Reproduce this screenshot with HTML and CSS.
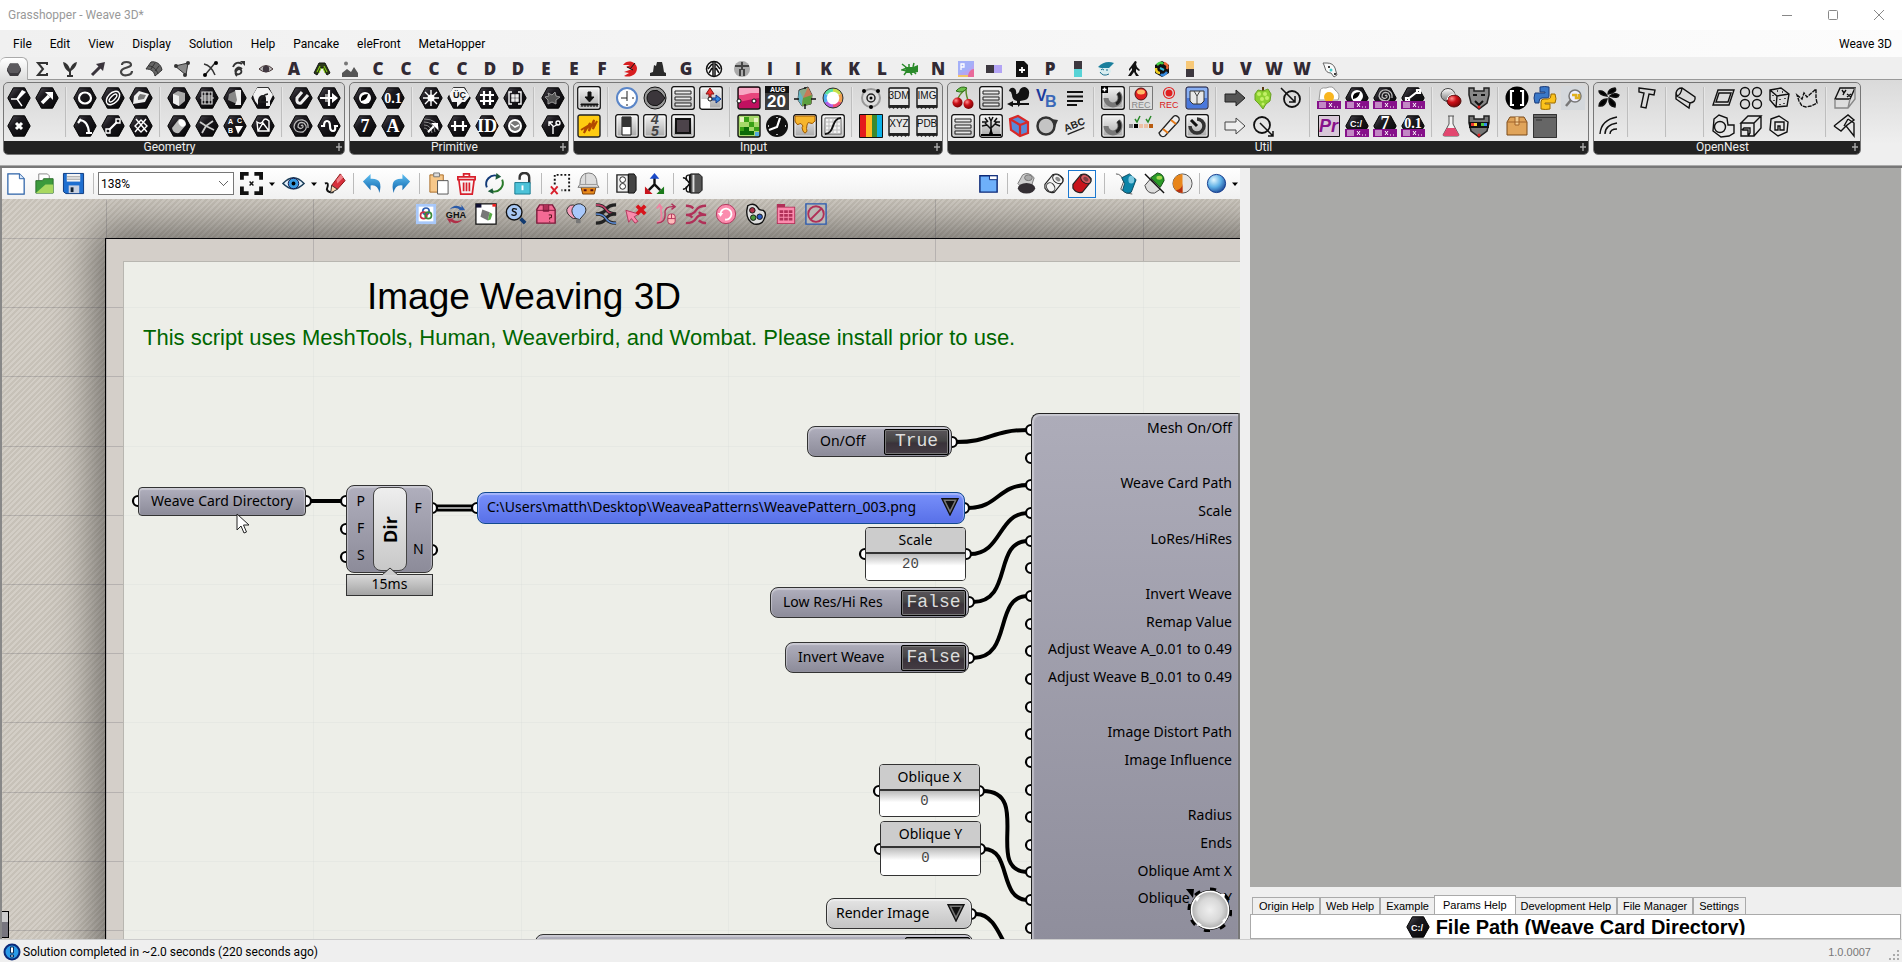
FILE: index.html
```html
<!DOCTYPE html>
<html lang="en">
<head>
<meta charset="utf-8">
<title>Grasshopper - Weave 3D*</title>
<link rel="stylesheet" href="styles.css">
</head>
<body>
<svg class="defs" aria-hidden="true">
<defs>
<linearGradient id="gh" x1="0" y1="0" x2="1" y2="1"><stop offset="0" stop-color="#55525a"/><stop offset=".35" stop-color="#1c1a1f"/><stop offset="1" stop-color="#050506"/></linearGradient>
<linearGradient id="gb" x1="0" y1="0" x2="0" y2="1"><stop offset="0" stop-color="#f4f4f4"/><stop offset="1" stop-color="#a6a6a6"/></linearGradient>
<linearGradient id="gd" x1="0" y1="0" x2="0" y2="1"><stop offset="0" stop-color="#fff"/><stop offset="1" stop-color="#777"/></linearGradient>
<linearGradient id="gblue" x1="0" y1="0" x2="0" y2="1"><stop offset="0" stop-color="#5fc0f2"/><stop offset="1" stop-color="#0b5fa8"/></linearGradient>
<radialGradient id="gred" cx=".35" cy=".3" r=".8"><stop offset="0" stop-color="#ff9090"/><stop offset=".4" stop-color="#cc1018"/><stop offset="1" stop-color="#600"/></radialGradient>
<radialGradient id="gball" cx=".35" cy=".3" r=".8"><stop offset="0" stop-color="#e2f7ff"/><stop offset=".5" stop-color="#5fb0e6"/><stop offset="1" stop-color="#123a8c"/></radialGradient>
<radialGradient id="gw" cx=".5" cy=".5" r=".5"><stop offset="0" stop-color="#efefef"/><stop offset=".6" stop-color="#d8d8d8"/><stop offset="1" stop-color="#a8a8a8"/></radialGradient>
<symbol id="hx" viewBox="0 0 24 24"><path d="M.8 12 6.4 1.8h11.2L23.2 12l-5.6 10.2H6.4z" fill="url(#gh)" stroke="#000"/></symbol>
<symbol id="bx" viewBox="0 0 24 24"><rect x=".8" y=".8" width="22.4" height="22.4" rx="2" fill="url(#gb)" stroke="#111" stroke-width="1.4"/><rect x="2" y="2" width="20" height="20" rx="1" fill="none" stroke="#fff" stroke-opacity=".8"/></symbol>
<symbol id="list" viewBox="0 0 24 24"><use href="#bx"/><path d="M4 5h16v3H4zM4 11h16v3H4zM4 17h16v3H4z" fill="#e8e8e8" stroke="#222"/></symbol>
<symbol id="chip" viewBox="0 0 24 24"><path d="M2 3a1 1 0 0 1 1-1h18a1 1 0 0 1 1 1v18H2z" fill="#e6e6e6" stroke="#111" stroke-width="1.4"/><path d="M2 19h20v4l-1.5-2-2 2-2-2-2 2-2-2-2 2-2-2-2 2-2-2-2 2z" fill="#222"/></symbol>
<symbol id="xt" viewBox="0 0 24 24"><path d="M0 15h24v8H0z" fill="#86118a"/><path d="M2 17h7M2 19h7M2 21h7M12 17l3 4M15 17l-3 4M17 21h1M20 21h1" stroke="#fff" fill="none"/></symbol>
<symbol id="jar" viewBox="0 0 24 24"><use href="#bx"/><path d="M17 7a7 7 0 1 1-12 5" fill="none" stroke="#777" stroke-width="5"/><path d="M17 7a7 7 0 0 1-2 11" fill="none" stroke="#222" stroke-width="3"/></symbol>
<symbol id="pl" viewBox="0 0 8 8"><path d="M4 0v8M1 4h6" stroke="#aaa" stroke-width="1.4"/></symbol>
<symbol id="caret" viewBox="0 0 8 8"><path d="M1 2.500h6L4 6z"/></symbol>
<symbol id="tri" viewBox="0 0 18 18"><path d="M1 .8h16L9 17z" fill="#777" stroke="#111" stroke-width="1.4"/><path d="M4.500 3h9L9 12z" fill="#111"/></symbol>
<symbol id="can" viewBox="0 0 24 24"><path d="M2 13 10 3q6-3 11 4 0 3-1 4l-8 10Q6 23 2 17z" stroke="#222" stroke-width="1.200"/><ellipse cx="15.500" cy="7.500" rx="6" ry="4" transform="rotate(35 15.500 7.500)" fill="#fff" fill-opacity=".3" stroke="#222"/><ellipse cx="15.500" cy="7.500" rx="3" ry="2" transform="rotate(35 15.500 7.500)" fill="#222" fill-opacity=".5"/></symbol>
</defs>
</svg>

<header class="title"><span>Grasshopper - Weave 3D*</span>
<div class="win">
<button aria-label="Minimize"><svg viewBox="0 0 12 12"><path d="M1 6.500h10"/></svg></button>
<button aria-label="Maximize"><svg viewBox="0 0 12 12"><rect x="1.500" y="1.500" width="9" height="9" rx="1"/></svg></button>
<button aria-label="Close"><svg viewBox="0 0 12 12"><path d="M1 1l10 10M11 1 1 11"/></svg></button>
</div></header>

<nav class="menu"><button>File</button><button>Edit</button><button>View</button><button>Display</button><button>Solution</button><button>Help</button><button>Pancake</button><button>eleFront</button><button>MetaHopper</button><span class="doc">Weave 3D</span></nav>

<nav class="tabs">
<button class="on" aria-label="Params"><svg viewBox="0 0 18 18"><path d="M2 8 5 2.500h8L16 8v2l-3 5H5l-3-5z" fill="#3c3a3e"/><path d="M2 8 5 2.500h8L16 8l-3 4H5z" fill="#5c5a5e"/></svg></button>
<button aria-label="Maths"><svg viewBox="0 0 18 18"><path d="M14 5V3H5l5 6-5 6h9v-2" fill="none" stroke="#333" stroke-width="2"/></svg></button>
<button aria-label="Sets"><svg viewBox="0 0 18 18"><path d="M8 16V12Q3 9 2 2q5 1 7 7 2-6 7-7-1 6-6 9v5z" fill="#333"/><path d="M6 15h6v2H6z" fill="#333"/></svg></button>
<button aria-label="Vector"><svg viewBox="0 0 18 18"><path d="M3 15 12 6" stroke="#3a343c" stroke-width="3"/><path d="M7 4 16 2l-2 9z" fill="#3a343c"/></svg></button>
<button aria-label="Curve"><svg viewBox="0 0 18 18"><path d="M5 5c0-4 9-4 9 0 0 3-10 2-10 7 0 5 11 4 11-1" fill="none" stroke="#444" stroke-width="2.200"/></svg></button>
<button aria-label="Surface"><svg viewBox="0 0 18 18"><path d="M6 2c5-1 10 2 11 8l-7 6C9 11 6 9 1 9z" fill="#666" stroke="#333"/><path d="M4 6c4 0 8 4 9 8M10 3 6 9M14 6l-4 5" stroke="#333" fill="none"/></svg></button>
<button aria-label="Mesh"><svg viewBox="0 0 18 18"><path d="M2 6 15 3l-2 12z" fill="#888" stroke="#333"/><circle cx="3" cy="6" r="2" fill="#333"/><circle cx="15" cy="3" r="2" fill="#333"/><circle cx="12" cy="15" r="2" fill="#333"/></svg></button>
<button aria-label="Intersect"><svg viewBox="0 0 18 18"><path d="M3 4c5 1 9 6 11 11M14 3 4 15" stroke="#333" stroke-width="1.500" fill="none"/><circle cx="15" cy="3" r="2"/><circle cx="4" cy="15" r="2"/></svg></button>
<button aria-label="Transform"><svg viewBox="0 0 18 18"><path d="M4 7c2-5 6-5 9-3M13 9c-4-4-8 1-6 4s7 0 5-3-8 2-4 6" fill="none" stroke="#333" stroke-width="1.800"/><path d="M11 1h5v5z" fill="#333"/></svg></button>
<button aria-label="Display"><svg viewBox="0 0 18 18"><path d="M2 9q7-7 14 0-7 6-14 0z" fill="#bbb" stroke="#433"/><circle cx="9" cy="9" r="3.200" fill="#403840"/></svg></button>
<button>A</button>
<button aria-label="Analysis"><svg viewBox="0 0 18 18"><path d="M1 13 6 3h6l5 10-3 2-4-7H8l-4 7z" fill="#2c3a18" stroke="#111"/><path d="M4 12l3-6M14 12l-3-6M6 13l2-5M12 13l-2-5" stroke="#8fe010"/></svg></button>
<button aria-label="Bitmap"><svg viewBox="0 0 18 18"><path d="M1 17v-4l5-4 4 3 3-5 4 6v4z" fill="#555"/><circle cx="5" cy="3.500" r="2" fill="#777"/></svg></button>
<button>C</button><button>C</button><button>C</button><button>C</button><button>D</button><button>D</button><button>E</button><button>E</button><button>F</button>
<button aria-label="Firefly"><svg viewBox="0 0 18 18"><path d="M2 5C6-1 15 1 16 8c0 7-7 10-13 8l5-3-5-1 8-3-6-2 4-2z" fill="#d81e20"/><path d="M9 9 14 3M6 7l6 3" stroke="#111"/></svg></button>
<button aria-label="Hat"><svg viewBox="0 0 18 18"><path d="M1 16v-3l3-1 1-7 2 1 1-4h5l1 4 1 6 2 1v3z" fill="#2b2b2b"/></svg></button>
<button>G</button>
<button aria-label="Kangaroo"><svg viewBox="0 0 18 18"><circle cx="9" cy="9" r="7.500" fill="#fff" stroke="#111" stroke-width="1.500"/><path d="M8 2v14M10 2v14M7 4 3 9M11 4l4 5M7 8l-3 5M11 8l3 5" stroke="#111" stroke-width="1.500"/></svg></button>
<button aria-label="Human"><svg viewBox="0 0 18 18"><circle cx="9" cy="9" r="8" fill="#aaa"/><path d="M2 6h14M9 2v8M7 9v7M11 9v7" stroke="#444" stroke-width="2"/></svg></button>
<button>I</button><button>I</button><button>K</button><button>K</button><button>L</button>
<button aria-label="Lady bug"><svg viewBox="0 0 18 18"><path d="M4 7h8l5-2v7l-5 1H5z" fill="#2a8a2a"/><path d="M1 4l5 4-5 2 5 1-3 4M9 12l2 3M13 3l-1 4M15 14l-2-2M8 8V4" stroke="#2a8a2a" fill="none" stroke-width="1.500"/></svg></button>
<button>N</button>
<button aria-label="Parakeet"><svg viewBox="0 0 18 18"><path d="M1 1h16v16H1z" fill="#b3a6f4"/><path d="M1 1h16q0 8-16 13z" fill="#a4b0f8"/><path d="M11 17c0-5 3-8 6-8v8z" fill="#e86a9a"/><path d="M1 15h10v2H1z" fill="#f2c46a"/><path d="M4 10V4h3v3H4" stroke="#fff" fill="none" stroke-width="1.300"/></svg></button>
<button aria-label="Pufferfish"><svg viewBox="0 0 18 18"><path d="M1 5h8v8H1z" fill="#3d383f"/><path d="M9 5h8v8H9z" fill="#b3a4f5"/></svg></button>
<button aria-label="Pancake"><svg viewBox="0 0 18 18"><path d="M3 1h8l4 4v12H3z" fill="#111"/><path d="M9 7v6M6 10h6" stroke="#fff" stroke-width="1.800"/></svg></button>
<button>P</button>
<button aria-label="Swatch"><svg viewBox="0 0 18 18"><path d="M5 1h8v8H5z" fill="#3d383f"/><path d="M5 9h8v8H5z" fill="#57d3d6"/></svg></button>
<button aria-label="Fish"><svg viewBox="0 0 18 18"><path d="M2 7q7-6 14-2l-3 2 1 5q-6 5-11 1z" fill="#d8edf0"/><path d="M1 7q7-7 16-4l-5 5H4z" fill="#1a7f9c"/><path d="M4 10q1-2 3 0M9 10h2M3 12q3 5 9 2" stroke="#1a6f8c" fill="none"/></svg></button>
<button aria-label="Bigfoot"><svg viewBox="0 0 18 18"><path d="M10 1c2 0 2 2 1 3l1 3 3 3-1 1-3-2v3l3 4h-3l-2-4-3 4H3l4-6V8l-3 3V9l3-4z" fill="#111"/></svg></button>
<button aria-label="Prism"><svg viewBox="0 0 18 18"><path d="M9 1l7 4v8l-7 4-7-4V5z" fill="#111"/><path d="M4 5q4-4 6-1" stroke="#4c4" stroke-width="2.500" fill="none"/><path d="M11 3q5 2 3 6" stroke="#e63" stroke-width="2.500" fill="none"/><path d="M14 12q-4 5-6 2" stroke="#38d" stroke-width="2.500" fill="none"/><path d="M3 8q0 5 4 5" stroke="#ec2" stroke-width="2.500" fill="none"/><path d="M7 8l4 2" stroke="#3bd" stroke-width="2"/></svg></button>
<button aria-label="Tile"><svg viewBox="0 0 18 18"><path d="M5 1h8v8H5z" fill="#f7c877"/><path d="M5 9h8v8H5z" fill="#3d383f"/></svg></button>
<button>U</button><button>V</button><button>W</button><button>W</button>
<button aria-label="Wombat"><svg viewBox="0 0 18 18"><path d="M3 5 2 3l4 0q6 0 8 5l2 7-3 2-3-4Q5 13 4 8z" fill="#fafafa" stroke="#666"/><circle cx="8" cy="7" r="1"/><circle cx="14" cy="14" r="1"/><circle cx="10" cy="10" r="1.500" fill="#4cc"/></svg></button>
</nav>

<section class="ribbon">
<div class="panel"><div class="icons">
<div class="g">
<button aria-label="Geometry point"><svg viewBox="0 0 24 24"><use href="#hx"/><path class="w" d="M10 13H4M10 13l5 7"/><path class="f" d="m9 13 6-9 4 2-8 8z"/></svg></button>
<button aria-label="Point"><svg viewBox="0 0 24 24"><use href="#hx"/><path class="w big-x" d="m9 9 6 6M15 9l-6 6"/></svg></button>
<button aria-label="Vector"><svg viewBox="0 0 24 24"><use href="#hx"/><path d="m7 17 7-7" stroke="#fff" stroke-width="3.500"/><path class="f" d="M10 6h8v8z"/></svg></button>
</div><div class="g">
<button aria-label="Circle"><svg viewBox="0 0 24 24"><use href="#hx"/><ellipse class="w2" cx="12" cy="12" rx="6" ry="5.500"/></svg></button>
<button aria-label="Arc"><svg viewBox="0 0 24 24"><use href="#hx"/><path class="w2" d="M6 6q9 0 10 13M5 9l3-4M13 19h6"/></svg></button>
<button aria-label="Ellipse"><svg viewBox="0 0 24 24"><use href="#hx"/><ellipse class="w" cx="12" cy="12" rx="8" ry="5" transform="rotate(-45 12 12)"/><ellipse class="w" cx="12" cy="12" rx="5" ry="2" transform="rotate(-45 12 12)"/></svg></button>
<button aria-label="Line"><svg viewBox="0 0 24 24"><use href="#hx"/><path class="w2" d="m8 16 8-8"/><path class="w" d="M5 15h4v4H5zM15 5h4v4h-4z"/></svg></button>
<button aria-label="Plane"><svg viewBox="0 0 24 24"><use href="#hx"/><path d="m5 10 5-5 10 3-4 8-12 2z" fill="#eee"/><path d="m9 11 2-3 6 1-2 4-6 1z" fill="#777"/></svg></button>
<button aria-label="Rectangle"><svg viewBox="0 0 24 24"><use href="#hx"/><path class="w" d="m12 6 6 6-6 6-6-6zM7 5l11 13M17 5 6 18"/></svg></button>
</div><div class="g">
<button aria-label="Box"><svg viewBox="0 0 24 24"><use href="#hx"/><path d="m6 8 5-3 7 2v8l-6 5-6-3z" fill="#aaa"/><path d="m6 8 6 2v10l-6-3z" fill="#eee"/></svg></button>
<button aria-label="Brep"><svg viewBox="0 0 24 24"><use href="#hx"/><path d="M5 14 12 5q7-1 7 6l-7 8q-6 1-7-5z" fill="#bbb"/><ellipse cx="15" cy="9" rx="3" ry="4" fill="#fff" transform="rotate(-40 15 9)"/></svg></button>
<button aria-label="Mesh"><svg viewBox="0 0 24 24"><use href="#hx"/><path d="M7 6h10v12H7zM7 10h10M7 14h10M10 6v12M14 6v12M5 12h14" fill="none" stroke="#ddd" stroke-width="1.200"/></svg></button>
<button aria-label="Mesh face"><svg viewBox="0 0 24 24"><use href="#hx"/><path d="m5 8 6 4 7-5M11 12l-4 7M11 12l8 4" stroke="#ccc" stroke-width="1.800" fill="none"/></svg></button>
<button aria-label="Surface"><svg viewBox="0 0 24 24"><use href="#hx"/><path d="M6 8 14 4v14l-9-4z" fill="#888"/><path d="M12 4h6v15h-6l2-5z" fill="#eee"/></svg></button>
<button aria-label="Twisted box"><svg viewBox="0 0 24 24"><use href="#hx"/><path class="f" d="M12 12h8l-5 8z"/><text x="5" y="10">A</text><text x="14" y="9">C</text><text x="5" y="19">B</text></svg></button>
<button aria-label="SubD"><svg viewBox="0 0 24 24"><use href="#hx"/><path d="M2 9 6 2h11l5 7-3 6v5h-4v-7q0-4-3-4-4 0-5 5v5L4 15z" fill="#f2f2f2"/><path d="M9 15q2-6 8-7M7 16h10" stroke="#222" fill="none" stroke-width="1.300"/></svg></button>
<button aria-label="Field"><svg viewBox="0 0 24 24"><use href="#hx"/><path class="w" d="M6 8q4 3 6-1t6 0v10H7zM7 17l5-8 6 8"/></svg></button>
</div><div class="g">
<button aria-label="Geometry"><svg viewBox="0 0 24 24"><use href="#hx"/><path d="M13 6 8 12q-1 6 4 5l7-8" fill="none" stroke="#eee" stroke-width="3"/></svg></button>
<button aria-label="Spiral"><svg viewBox="0 0 24 24"><use href="#hx"/><path d="M12 12q2-2 2 1-2 3-5 0 0-6 6-4 5 5-1 9-8 1-9-5 1-8 9-7 6 2 5 8" fill="none" stroke="#bbb" stroke-width="1.300"/></svg></button>
<button aria-label="Transform"><svg viewBox="0 0 24 24"><use href="#hx"/><path d="M8 8h5v8H8z" fill="#999"/><path class="w2" d="M3 12h12M12 4v16"/><path class="f" d="m15 7 6 5-6 5z"/></svg></button>
<button aria-label="Wave"><svg viewBox="0 0 24 24"><use href="#hx"/><path class="w2" d="M4 12h3q0-5 3-5t3 5 3 5 2-5h3"/></svg></button>
</div></div><h2>Geometry<svg><use href="#pl"/></svg></h2></div>

<div class="panel"><div class="icons">
<div class="g">
<button aria-label="Boolean"><svg viewBox="0 0 24 24"><use href="#hx"/><circle cx="12" cy="12" r="6" class="f"/><path d="M8 15q-1-7 7-7-1 6-7 7z"/></svg></button>
<button aria-label="Integer"><svg viewBox="0 0 24 24"><use href="#hx"/><text class="b" x="12" y="18">7</text></svg></button>
<button aria-label="Number"><svg viewBox="0 0 24 24"><use href="#hx"/><text class="b s" x="12" y="17">0.1</text></svg></button>
<button aria-label="Text"><svg viewBox="0 0 24 24"><use href="#hx"/><text class="b" x="12" y="18">A</text></svg></button>
</div><div class="g">
<button aria-label="Colour"><svg viewBox="0 0 24 24"><use href="#hx"/><circle class="f" cx="12" cy="12" r="3.500"/><path class="w" d="M12 4v16M4 12h16M6 6l12 12M18 6 6 18"/></svg></button>
<button aria-label="Domain"><svg viewBox="0 0 24 24"><use href="#hx"/><path d="M5 5q14 0 15 12M5 8q10 0 11 10M5 11q7 0 8 8M5 14q4 0 5 5" fill="none" stroke="#888"/><path class="w2" d="m9 18 6-6"/><path class="f" d="M12 9h7v7z"/></svg></button>
<button aria-label="Culture"><svg viewBox="0 0 24 24"><use href="#hx"/><path d="M2 8 6 2h11l6 8-5 6h-3l-5 5v-5H5z" fill="#f4f4f4"/><text x="6" y="12" class="k">ÜÇ</text></svg></button>
<button aria-label="Interval"><svg viewBox="0 0 24 24"><use href="#hx"/><path class="w2" d="M4 12h16M8 7v10M16 7v10"/></svg></button>
<button aria-label="Matrix"><svg viewBox="0 0 24 24"><use href="#hx"/><path class="w2" d="M9 5v14M15 5v14M5 9h14M5 15h14"/></svg></button>
<button aria-label="Guid"><svg viewBox="0 0 24 24"><use href="#hx"/><text class="b" x="12" y="18">ID</text></svg></button>
<button aria-label="Data path"><svg viewBox="0 0 24 24"><use href="#hx"/><path class="w" d="M9 6H6v12h3M15 6h3v12h-3M9 9h2v2H9zM13 9h2v2h-2zM9 13h2v2H9zM13 13h2v2h-2z"/></svg></button>
<button aria-label="Time"><svg viewBox="0 0 24 24"><use href="#hx"/><circle class="f" cx="12" cy="12" r="7"/><circle cx="12" cy="12" r="5" fill="#777"/><path d="m8 10 4 3 4-2" fill="none" stroke="#fff" stroke-width="1.500"/></svg></button>
</div><div class="g">
<button aria-label="Shader"><svg viewBox="0 0 24 24"><use href="#hx"/><path d="m7 7 4 2 3-3 1 4 4 1-4 3v4l-4-2-4 2v-4l-3-3 4-1z" fill="#555" stroke="#999"/></svg></button>
<button aria-label="File"><svg viewBox="0 0 24 24"><use href="#hx"/><path class="w" d="M12 20v-8L8 8M12 13l5-3M8 12V8h4"/><circle class="w" cx="17" cy="9" r="2"/></svg></button>
</div></div><h2>Primitive<svg><use href="#pl"/></svg></h2></div>

<div class="panel"><div class="icons">
<div class="g">
<button aria-label="Slider"><svg viewBox="0 0 24 24"><use href="#bx"/><path d="M11 6h3v5h3l-4.500 5L8 11h3zM4 18h17v1H4zM5 19v2M8 19v2M11 19v2M14 19v2M17 19v2M20 19v2" stroke="#111" fill="#111"/></svg></button>
<button aria-label="Graph"><svg viewBox="0 0 24 24"><rect x="1" y="1" width="22" height="22" rx="2" fill="#fc1" stroke="#222" stroke-width="1.400"/><path d="m4 16 5-3-2 6 6-10-1 8 5-11-1 9 4-8" fill="none" stroke="#b24a00" stroke-width="2"/></svg></button>
</div><div class="g">
<button aria-label="Clock"><svg viewBox="0 0 24 24"><circle cx="12" cy="12" r="10" fill="#fff" stroke="#5b86c8" stroke-width="2"/><path d="M12 5v7H6M12 12v3M17 12h2M12 18v2" stroke="#222" fill="none"/></svg></button>
<button aria-label="Toggle"><svg viewBox="0 0 24 24"><use href="#bx"/><path d="M7 3h9v18H7z" fill="#fff" stroke="#111"/><path d="M7 3h9v10H7z" fill="#333"/></svg></button>
<button aria-label="Knob"><svg viewBox="0 0 24 24"><circle cx="12" cy="12" r="11" fill="#999" stroke="#111"/><path d="M4 12a8 8 0 0 1 14-5l4 5-4 5a8 8 0 0 1-14-5z" fill="#3b363b" stroke="#111"/></svg></button>
<button aria-label="Digit scroller"><svg viewBox="0 0 24 24"><use href="#bx"/><text class="k d" x="8" y="10">4</text><text class="k d" x="8" y="22">5</text></svg></button>
<button aria-label="Value list"><svg viewBox="0 0 24 24"><use href="#list"/></svg></button>
<button aria-label="Button"><svg viewBox="0 0 24 24"><use href="#bx"/><rect x="5" y="5" width="14" height="14" fill="#4c434a" stroke="#111" stroke-width="2"/></svg></button>
<button aria-label="Gizmo"><svg viewBox="0 0 24 24"><use href="#bx"/><path d="M2 13h9v9H2z" fill="#fff"/><path d="M10 12V8H7l4-6 4 6h-3v4" fill="#e33" stroke="#811"/><path d="M13 12h4V9l5 4-5 4v-3h-4" fill="#38d" stroke="#138"/><circle cx="11" cy="13" r="2" fill="#fff" stroke="#111"/></svg></button>
</div><div class="g">
<button aria-label="Gradient"><svg viewBox="0 0 24 24"><rect x="1" y="1" width="22" height="22" rx="2" fill="#e8447c" stroke="#111" stroke-width="1.400"/><path d="M2 2h20v5h-8L6 9H2z" fill="#f7a8c4"/><path d="M2 16 16 13l6-1v10H2z" fill="#c01060"/><circle cx="2" cy="15" r="2" fill="#fff" stroke="#111"/><circle cx="17" cy="15" r="2" fill="#fff" stroke="#111"/></svg></button>
<button aria-label="Image sampler"><svg viewBox="0 0 24 24"><rect x="1" y="1" width="22" height="22" rx="2" fill="#a6d86a" stroke="#111" stroke-width="1.400"/><path d="M7 3h5v5H7zM12 8h5v5h-5zM3 13h4v4H3zM17 13h5v4h-5z" fill="#3aa016"/><path d="M7 13h5v8H3v-4h4zM12 17h5v4h-5z" fill="#0c6a08"/><path d="M3 3h4v5H3zM17 4h4v4h-4z" fill="#e6f2c0"/><path d="M18 18h4v4h-4z" fill="#5ad"/></svg></button>
<button aria-label="Calendar"><svg viewBox="0 0 24 24"><path d="M0 0h24v24H0z" fill="#3b3b3b"/><path d="M0 0h24v7H0z" fill="#111"/><text x="5" y="6" class="u">AUG</text><text x="2" y="21" class="u l">20</text></svg></button>
<button aria-label="Clock"><svg viewBox="0 0 24 24"><circle cx="12" cy="12" r="11" fill="#111"/><path class="w2" d="m4 16 8-3 3-9"/><path class="w" d="M12 3v1M20 12h1M12 20v1M3 12h1"/></svg></button>
<button aria-label="Colour picker"><svg viewBox="0 0 24 24"><path d="m6 4 9-3 4 8-1 9-9 2-4-6z" fill="#8a8" stroke="#333"/><path d="m6 4 4 8-1 8-4-6z" fill="#63b4c4"/><path d="m10 12 5-11 4 8-1 9-9 2z" fill="#c87a58"/><path d="m10 12 9-3-1 9-9 2z" fill="#5ba040"/><path d="M1 13h5M18 13h5M12 18v5M12 1v2" stroke="#111" stroke-width="1.400"/></svg></button>
<button aria-label="Colour swatch"><svg viewBox="0 0 24 24"><use href="#bx"/><path d="M2 2h20v5q-3 4-5 2t-3 2 0 6q-2 4-4 0t0-5q-2-4-4-2T2 7z" fill="#f7b52c" stroke="#a05a00"/></svg></button>
<button aria-label="Colour wheel"><svg viewBox="0 0 24 24"><circle cx="12" cy="12" r="9.500" fill="#fff" stroke="#333"/><g fill="none" stroke-width="3.500"><path d="M12 4a8 8 0 0 1 7 4" stroke="#c8e04a"/><path d="M19 8a8 8 0 0 1 0 8" stroke="#f0a050"/><path d="M19 16a8 8 0 0 1-7 4" stroke="#f0507a"/><path d="M12 20a8 8 0 0 1-7-4" stroke="#b060e8"/><path d="M5 16a8 8 0 0 1 0-8" stroke="#50b0f0"/><path d="M5 8a8 8 0 0 1 7-4" stroke="#5ae0a0"/></g><circle cx="12" cy="12" r="10" fill="none" stroke="#333"/></svg></button>
<button aria-label="Graph mapper"><svg viewBox="0 0 24 24"><use href="#bx"/><path d="M4 4h16v16H4z" fill="#f4f4f4" stroke="#777"/><path d="M4 8h16M4 12h16M4 16h16M8 4v16M12 4v16M16 4v16" stroke="#bbb"/><path d="M4 20c10 0 6-16 16-16" fill="none" stroke="#111" stroke-width="2"/></svg></button>
</div><div class="g">
<button aria-label="Atom"><svg viewBox="0 0 24 24"><circle cx="12" cy="12" r="9" fill="none" stroke="#999" stroke-width="2"/><circle cx="12" cy="12" r="4" fill="none" stroke="#222" stroke-width="1.500"/><circle cx="12" cy="12" r="1.500"/><circle cx="5" cy="5" r="2"/><circle cx="19" cy="5" r="2"/><circle cx="12" cy="21" r="2"/></svg></button>
<button aria-label="Spectrum"><svg viewBox="0 0 24 24"><path d="M.5.500h23v23H.5z" fill="#3b8a2e" stroke="#111"/><path d="M1 1h6v22H1z" fill="#e41a1c"/><path d="M7 1h6v22H7z" fill="#fb2"/><path d="M18 1h5v22h-5z" fill="#0cb2e8"/></svg></button>
<button aria-label="Import 3DM"><svg viewBox="0 0 24 24"><use href="#chip"/><text class="m" x="12" y="13">3DM</text></svg></button>
<button aria-label="Import XYZ"><svg viewBox="0 0 24 24"><use href="#chip"/><text class="m" x="12" y="13">XYZ</text></svg></button>
<button aria-label="Import IMG"><svg viewBox="0 0 24 24"><use href="#chip"/><text class="m" x="12" y="13">IMG</text></svg></button>
<button aria-label="Import PDB"><svg viewBox="0 0 24 24"><use href="#chip"/><text class="m" x="12" y="13">PDB</text></svg></button>
</div></div><h2>Input<svg><use href="#pl"/></svg></h2></div>

<div class="panel"><div class="icons">
<div class="g">
<button aria-label="Cherry picker"><svg viewBox="0 0 24 24"><path d="M15 3Q8 8 6 15M15 3q0 8 3 13" stroke="#5a8a2a" stroke-width="1.500" fill="none"/><path d="M5 5q5-6 11-3-4 6-11 3z" fill="#6cc04a" stroke="#2c6a18"/><circle cx="6.500" cy="16.500" r="5" fill="url(#gred)"/><circle cx="17.500" cy="18" r="5" fill="url(#gred)"/></svg></button>
<button aria-label="List"><svg viewBox="0 0 24 24"><use href="#list"/></svg></button>
<button aria-label="Panel"><svg viewBox="0 0 24 24"><use href="#list"/></svg></button>
<button aria-label="Param viewer"><svg viewBox="0 0 24 24"><use href="#bx"/><path d="M12 21V11M12 15 6 9M12 14l6-6M12 11V5M8 11l-5 1M16 10l5 2M9 8 6 4M15 8l3-4M8 8H3M16 8h5M12 7l-2-4M12 7l2-4" stroke="#111" stroke-width="1.500" fill="none"/><path d="M2 20h20v2H2zM10 20l2-6 2 6z"/></svg></button>
<button aria-label="Weathercock"><svg viewBox="0 0 24 24"><path d="M2 5q1-4 5-3 3 2 2 6 2 0 3-2 1-5 6-5 5 2 4 7 0 5-4 6l-5 1v2h9v2h-9l-2 2v-2H6v2l-6-3 6-3v2h4v-2Q5 14 5 9L4 6z" fill="#111"/></svg></button>
<button aria-label="Legacy box"><svg viewBox="0 0 24 24"><path d="m3 5 8-3 10 6v11l-8 3-9-6z" fill="#5a8ad8" stroke="#d82828" stroke-width="2.200"/><path d="m3 5 10 6 8-3M13 11v11" fill="none" stroke="#d82828" stroke-width="2.200"/></svg></button>
<button aria-label="VB Script"><svg viewBox="0 0 24 24"><text class="vb" x="1" y="15">V</text><text class="vb c2" x="10" y="21">B</text></svg></button>
<button aria-label="Ring"><svg viewBox="0 0 24 24"><circle cx="11" cy="12" r="8.500" fill="#c4c4c4" stroke="#333" stroke-width="2.500"/><path d="m16 5 7 1-3 7z" fill="#333"/></svg></button>
<button aria-label="Text lines"><svg viewBox="0 0 24 24"><path d="M4 6h16M4 10.500h16M4 15h16M4 19h10" stroke="#111" stroke-width="2"/></svg></button>
<button aria-label="ABC"><svg viewBox="0 0 24 24"><g transform="rotate(-22 12 12)"><text class="abc" x="1" y="14">ABC</text><path d="M2 17h18" stroke="#222" stroke-width="1.500"/></g></svg></button>
</div><div class="g">
<button aria-label="Data dam"><svg viewBox="0 0 24 24"><use href="#jar"/><path d="M0 0h7v7H0z"/><path class="w" d="M3.500 1.500v4M1.500 3.500h4"/></svg></button>
<button aria-label="Data jar"><svg viewBox="0 0 24 24"><use href="#jar"/></svg></button>
<button aria-label="Data recorder"><svg viewBox="0 0 24 24"><path d="M.5.500h23v23H.5z" fill="#ddd" stroke="#777"/><circle cx="12" cy="8" r="6" fill="#e02020" stroke="#511"/><ellipse cx="12" cy="6" rx="4" ry="2.500" fill="#fb6"/><text class="r" x="12" y="22">REC</text></svg></button>
<button aria-label="Ticks"><svg viewBox="0 0 24 24"><path d="m6 5 2 3 3-6M17 5l2 3 3-6" stroke="#2a8a2a" stroke-width="1.500" fill="none"/><path d="M0 10h4v4H0z" fill="#888"/><path d="M5 10h4v4H5z"/><path d="M10 10h4v4h-4zM15 10h4v4h-4z" fill="#ecc0a4"/><path d="M20 10h4v4h-4z" fill="#b85c10"/></svg></button>
<button aria-label="Record"><svg viewBox="0 0 24 24"><circle cx="12" cy="7" r="5.500" fill="none" stroke="#e02020" stroke-width="1.200"/><circle cx="12" cy="7" r="3.500" fill="#e02020"/><text class="r red" x="12" y="22">REC</text></svg></button>
<button aria-label="Cigarette"><svg viewBox="0 0 24 24"><path d="M2 19 16 3q3-3 6 1 1 2-1 4L8 22q-4 2-6-3z" fill="#eee" stroke="#222" stroke-width="1.300"/><path d="m6 15 5 4M14 6l5 4" stroke="#e87c1a" stroke-width="2"/></svg></button>
<button aria-label="Zip"><svg viewBox="0 0 24 24"><rect x="1" y="1" width="22" height="22" rx="2" fill="#8ab0f4" stroke="#113"/><path d="M2 12h20v10H2z" fill="#4a78dc"/><path d="M5 5h14v10l-3 3H8l-3-3z" fill="#e8e8e8" stroke="#333"/><path d="M9 5l3 5 3-5M12 10v8" stroke="#444" fill="none"/></svg></button>
<button aria-label="Timer"><svg viewBox="0 0 24 24"><use href="#bx"/><path d="M12 5a7 7 0 1 1-7 7" fill="none" stroke="#333" stroke-width="3.500"/><path d="m6 6 6 6" stroke="#111" stroke-width="3"/></svg></button>
</div><div class="g">
<button aria-label="Arrow"><svg viewBox="0 0 24 24"><path d="M2 8h11V4l9 8-9 8v-4H2z" fill="#555" stroke="#222"/></svg></button>
<button aria-label="Relay"><svg viewBox="0 0 24 24"><path d="M2 8h11V4l9 8-9 8v-4H2z" fill="#eee" stroke="#444"/></svg></button>
<button aria-label="Grapes"><svg viewBox="0 0 24 24"><path d="M12 1v4" stroke="#5a3a10" stroke-width="2"/><path d="m12 5 5-2 3 5-1 7-4 3-3 5-4-5-4-4V8l3-4z" fill="#8cd030" stroke="#6aa022"/><g fill="#c4f068"><circle cx="8" cy="8" r="2"/><circle cx="14" cy="8" r="2"/><circle cx="11" cy="13" r="2"/><circle cx="16" cy="12" r="2"/><circle cx="12" cy="18" r="1.500"/></g></svg></button>
<button aria-label="Circle out"><svg viewBox="0 0 24 24"><circle cx="11" cy="11" r="8" fill="none" stroke="#111" stroke-width="1.800"/><path d="m9 9 13 13M22 17v5h-5" stroke="#111" stroke-width="1.500" fill="none"/></svg></button>
<button aria-label="Circle in"><svg viewBox="0 0 24 24"><circle cx="13" cy="13" r="8" fill="none" stroke="#111" stroke-width="1.800"/><path d="m2 2 14 14M16 10v6h-6" stroke="#111" stroke-width="1.500" fill="none"/></svg></button>
</div><div class="g">
<button aria-label="Egg"><svg viewBox="0 0 24 24"><path d="M3 6q0-5 6-4 7-3 9 2 6 4 3 10H2z" fill="#fff" stroke="#999"/><circle cx="12" cy="11" r="5" fill="#f9b620"/><use href="#xt"/></svg></button>
<button aria-label="Properties"><svg viewBox="0 0 24 24"><path d="M1.500 1.500h21v21h-21z" fill="#d8c8d8" stroke="#111"/><text class="p" x="2" y="18">Pr</text></svg></button>
<button aria-label="Boolean field"><svg viewBox="0 0 24 24"><use href="#hx"/><circle cx="12" cy="10" r="6" class="f"/><path d="M8 13q-1-7 7-7-1 6-7 7z"/><use href="#xt"/></svg></button>
<button aria-label="Path field"><svg viewBox="0 0 24 24"><use href="#hx"/><text class="n" x="5" y="13">C:/</text><use href="#xt"/></svg></button>
<button aria-label="Spiral field"><svg viewBox="0 0 24 24"><use href="#hx"/><path d="M12 10q2-2 2 1-2 3-5 0 0-6 6-4 4 5-1 8-7 0-8-5 1-7 8-6 6 2 5 8" fill="none" stroke="#bbb" stroke-width="1.300"/><use href="#xt"/></svg></button>
<button aria-label="Integer field"><svg viewBox="0 0 24 24"><use href="#hx"/><text class="b" x="12" y="15">7</text><use href="#xt"/></svg></button>
<button aria-label="Line field"><svg viewBox="0 0 24 24"><use href="#hx"/><path class="w2" d="m7 13 9-7M5 12h3v3H5zM16 4h3v3h-3z"/><use href="#xt"/></svg></button>
<button aria-label="Number field"><svg viewBox="0 0 24 24"><use href="#hx"/><text class="b s" x="12" y="14">0.1</text><use href="#xt"/></svg></button>
</div><div class="g">
<button aria-label="Spheres"><svg viewBox="0 0 24 24"><ellipse cx="9" cy="9" rx="7" ry="6.500" fill="url(#gd)" stroke="#444"/><ellipse cx="15" cy="15" rx="7" ry="6" fill="url(#gred)" stroke="#511"/><path d="M8 14q1-6 8-6" stroke="#fff" fill="none"/></svg></button>
<button aria-label="Flask"><svg viewBox="0 0 24 24"><path d="M9 2h6M10 2v8L4 21q0 1 2 1h12q2 0 2-1l-6-11V2" fill="#f2f2f2" stroke="#555"/><path d="M8 14h8l4 7q0 1-2 1H6q-2 0-2-1z" fill="#e2476f"/></svg></button>
<button aria-label="Mouse"><svg viewBox="0 0 24 24"><path d="M2 2h5v3h10V2h5v7l-2 8-8 6-8-6-2-8z" fill="#888" stroke="#222" stroke-width="1.500"/><path d="M6 9h4M14 9h4M8 15l4 4 4-4" stroke="#111" stroke-width="2" fill="none"/><circle cx="12" cy="21" r="1.500" fill="#e22"/></svg></button>
<button aria-label="Mouse with glasses"><svg viewBox="0 0 24 24"><path d="M2 2h5v3h10V2h5v7l-2 8-8 6-8-6-2-8z" fill="#777" stroke="#222" stroke-width="1.500"/><path d="M2 8h20v6H2z" fill="#111"/><path d="M4 9h3v3H4z" fill="#e33"/><path d="M7 9h3v3H7z" fill="#fc3"/><path d="M14 9h3v3h-3z" fill="#4c4"/><path d="M17 9h3v3h-3z" fill="#38e"/><circle cx="12" cy="21" r="1.500" fill="#e22"/></svg></button>
</div><div class="g">
<button aria-label="Brackets"><svg viewBox="0 0 24 24"><circle cx="12" cy="12" r="11.500"/><path class="w2" d="M9 5H6v14h3M15 5h3v14h-3"/></svg></button>
<button aria-label="Package"><svg viewBox="0 0 24 24"><path d="M2 8 5 3h14l3 5v13H2z" fill="#e0a45a" stroke="#7a4a18"/><path d="M2 8h20M10 3v8h4V3" stroke="#a0622a" fill="#f4cf94"/></svg></button>
<button aria-label="Python"><svg viewBox="0 0 24 24"><path d="M7 1q5-1 9 0v9q0 2-2 2H9q-3 0-3 4v1H2q-2-5 0-10h10V6H7z" fill="#3a78c8" stroke="#1a3a78"/><path d="M17 23q-5 1-9 0v-7q0-3 3-3h4q3 0 3-4V8h4q2 5 0 9H12v1h5z" fill="#fbc21c" stroke="#9a6a00"/></svg></button>
<button aria-label="Editor"><svg viewBox="0 0 24 24"><path d="M0 0h24v24H0z" fill="#666"/><path d="M.5 3.500h23M.5.500h23v23H.5zM3 6h6" stroke="#333" fill="none"/></svg></button>
<button aria-label="Search"><svg viewBox="0 0 24 24"><path d="M0 0h24v24H0z" fill="#d4d8dc"/><circle cx="14" cy="10" r="6" fill="#eef" stroke="#777" stroke-width="1.500"/><path d="M11 9h4v3h3v-4" stroke="#e0b020" stroke-width="2.500" fill="none"/><path d="m10 14-5 6" stroke="#777" stroke-width="2.500"/></svg></button>
</div></div><h2>Util<svg><use href="#pl"/></svg></h2></div>

<div class="panel line"><div class="icons">
<div class="g">
<button aria-label="Leaves"><svg viewBox="0 0 24 24"><path d="M11 8Q11 3 18 2q3 4-7 6zM10 10Q7 4 2 5q0 4 8 5zM10 13q-7 0-8 7 6 1 8-7zM12 12q-1 8 6 9 2-5-6-9zM13 10q4-4 9-1-1 4-9 1z" class="solid"/></svg></button>
<button aria-label="Arcs"><svg viewBox="0 0 24 24"><path d="M3 20Q4 6 20 3M8 20q0-9 12-11M13 20q0-5 7-5"/></svg></button>
</div><div class="g">
<button aria-label="Text"><svg viewBox="0 0 24 24"><path d="m4 2 16 2-1 5-5-1-3 14-5-1 3-14-5-1z"/></svg></button>
</div><div class="g">
<button aria-label="Tube"><svg viewBox="0 0 24 24"><path d="M3 7q1-5 6-5l13 9q1 5-5 6L4 10zM3 7v6l13 9 1-5M4 10Q8 9 9 2"/></svg></button>
</div><div class="g">
<button aria-label="Sheet"><svg viewBox="0 0 24 24"><path d="M7 4h16l-5 15H2zM8 7h12l-3 9H5z"/></svg></button>
<button aria-label="Shapes"><svg viewBox="0 0 24 24"><path d="m3 5 5-4 8 3 1 7h6v8l-5 3-8 1-8-6z"/><circle cx="9" cy="13" r="5.500"/></svg></button>
<button aria-label="Circles"><svg viewBox="0 0 24 24"><circle cx="6" cy="6" r="4.500"/><circle cx="18" cy="6" r="4.500"/><circle cx="6" cy="18" r="4.500"/><circle cx="18" cy="18" r="4.500"/></svg></button>
<button aria-label="Cubes"><svg viewBox="0 0 24 24"><path d="M2 9 9 2h13l-7 7zM2 9h13v13H2zM22 2v12l-7 8M3 16l2-2h6v5l-2 3M3 16h6v5"/></svg></button>
<button aria-label="Dice"><svg viewBox="0 0 24 24"><path d="m3 4 11-2 8 6-2 12-11 1-6-7zM3 4l7 6 12-2M10 10 9 21M6 9v1M7 14v1M13 13v1M18 12v1M13 18v1M17 17v1M10 5h1M15 6h1"/></svg></button>
<button aria-label="Hexagon"><svg viewBox="0 0 24 24"><path d="m4 5 8-3 9 6-1 10-9 4-8-6zM8 8h9v8h-4v-4h-2v4H8z"/></svg></button>
<button aria-label="Rhino"><svg viewBox="0 0 24 24"><path d="m2 9 5 4 2-6 3 4 9-8v9l1 5-6 3-5 1-4-1-3-5z" stroke-dasharray="4 1"/></svg></button>
</div><div class="g">
<button aria-label="Axes box"><svg viewBox="0 0 24 24"><path d="M7 2h15l-5 11H2zM9 4l2 3 2-3M11 7l-1 2M14 8l4 3M18 8l-4 3"/><path class="dim" d="M2 13v9h13l7-9V2M17 13l-2 9"/></svg></button>
<button aria-label="Fold"><svg viewBox="0 0 24 24"><path d="M1 12 15 1l6 5-8 6 8 10V9l-6-4M1 12l7 5 5-5M15 5l-4 7"/></svg></button>
</div></div><h2>OpenNest<svg><use href="#pl"/></svg></h2></div>
</section>

<main class="work">
<section class="left">
<div class="bar">
<button aria-label="New"><svg viewBox="0 0 24 24"><path d="M3 2h12l5 5v16H3z" fill="#fff" stroke="#2b62a8" stroke-width="1.300"/><path d="M15 2v5h5" fill="#dbe8fa" stroke="#2b62a8"/></svg></button>
<button aria-label="Open"><svg viewBox="0 0 24 24"><path d="M6 9V2h9l2 2v5" fill="#fff" stroke="#888"/><path d="M3 22V9h7l1-2h10v15z" fill="#3c9a3c" stroke="#2a6e2a"/><path d="m3 22 10-9h8v9z" fill="#a8d860"/></svg></button>
<button class="mid" aria-label="Save"><svg viewBox="0 0 24 24"><path d="M1.500 1.500h21v21H4l-2.500-2z" fill="#1f6fd0" stroke="#0c3a80"/><path d="M5 2h14v8H5z" fill="#f4f4f4"/><path d="M5 5h14M5 7.500h14" stroke="#999"/><path d="M7 14h11v8H7z" fill="#c8d0e0"/><path d="M9 16h3v5H9z" fill="#123"/></svg></button>
<i class="sep"></i>
<select aria-label="Zoom"><option>138%</option></select>
<button class="mid" aria-label="Zoom extents"><svg viewBox="0 0 24 24"><path d="M2 8V2h7M15 2h7v6M22 15v7h-7M9 22H2v-7" fill="none" stroke="#111" stroke-width="4"/><path d="m10 10 4 4M14 10l-4 4" stroke="#111" stroke-width="1.500"/></svg></button>
<button class="ar" aria-label="Zoom options"><svg viewBox="0 0 8 8"><use href="#caret"/></svg></button>
<button class="mid" aria-label="Views"><svg viewBox="0 0 24 24"><path d="M1 12q11-12 22 0-11 11-22 0z" fill="#e6f2fb" stroke="#1a3c58" stroke-width="1.600"/><circle cx="12" cy="12" r="5.500" fill="#3a9ae0" stroke="#114"/><circle cx="12" cy="12" r="2"/></svg></button>
<button class="ar" aria-label="View options"><svg viewBox="0 0 8 8"><use href="#caret"/></svg></button>
<button aria-label="Sketch"><svg viewBox="0 0 24 24"><path d="M2 12q5-2 2 6 1 4 7 3" fill="none" stroke="#111" stroke-width="2"/><path d="M9 20V14l9-12 5 7-8 9z" fill="#d8303c" stroke="#811"/><path d="m14 8 5-6 2 4-6 6z" fill="#f08088"/><path d="m9 14-1 8 7-4z" fill="#fcd8b0" stroke="#333"/></svg></button>
<i class="sep"></i>
<button aria-label="Undo"><svg viewBox="0 0 24 24"><path d="M10 2v5q14-1 9 15-1-9-9-8v5L2 10z" fill="url(#gblue)"/></svg></button>
<button aria-label="Redo"><svg viewBox="0 0 24 24"><path d="M14 2v5Q0 6 5 22q1-9 9-8v5l8-9z" fill="url(#gblue)"/></svg></button>
<i class="sep"></i>
<button aria-label="Paste"><svg viewBox="0 0 24 24"><path d="M3 3h14v18H3z" fill="#f7c88a" stroke="#a86c28"/><path d="M7 1h6v4H7z" fill="#ddd" stroke="#777"/><path d="M11 9h11v14H11z" fill="#fff" stroke="#555"/></svg></button>
<button aria-label="Delete"><svg viewBox="0 0 24 24"><path d="M4 8h16l-2 15H6zM3 5h18v3H3zM9 5V2h6v3M9 11v9M12 11v9M15 11v9" fill="none" stroke="#d8202c" stroke-width="1.800"/></svg></button>
<button aria-label="Recompute"><svg viewBox="0 0 24 24"><path d="M4 16A9 9 0 0 1 15 4" fill="none" stroke="#123a78" stroke-width="2"/><path d="M20 8A9 9 0 0 1 9 20" fill="none" stroke="#2a7a2a" stroke-width="2"/><path d="m14 1 5 4-6 3zM10 17l-5 3 6 3z" fill="#1c5a3a"/></svg></button>
<button aria-label="Lock"><svg viewBox="0 0 24 24"><path d="M9 8V6q0-5 5-5t5 5v6" fill="none" stroke="#333" stroke-width="2.500"/><path d="M4 11h16v12H4z" fill="#4cc2d8" stroke="#1a7a90"/><path d="M12 14v5" stroke="#fff" stroke-width="2"/></svg></button>
<i class="sep"></i>
<button aria-label="Deselect"><svg viewBox="0 0 24 24"><path d="M6 13V3h15v16h-8" fill="none" stroke="#111" stroke-width="2" stroke-dasharray="2 2"/><path d="m2 15 7 8M9 15l-7 8" stroke="#d8202c" stroke-width="2"/></svg></button>
<button aria-label="Helmet"><svg viewBox="0 0 24 24"><path d="M4 15h16l-2 8H6z" fill="#e88a1a" stroke="#7a3a00"/><path d="M3 13q0-12 9-12t9 12l2 3H1z" fill="#ddd" stroke="#777"/><path d="M9 2v11M3 13h18" stroke="#999"/><path d="M7 19h3M14 19h3" stroke="#511" stroke-width="2"/></svg></button>
<i class="sep"></i>
<button aria-label="Cluster"><svg viewBox="0 0 24 24"><path d="M2 3h12v18H2z" fill="#eee" stroke="#222" stroke-width="1.400"/><path d="M14 2h6l2 3v14l-2 3h-6z" fill="#444" stroke="#111"/><circle cx="8" cy="8" r="3" fill="#fff" stroke="#222"/><circle cx="8" cy="15" r="3" fill="#fff" stroke="#222"/></svg></button>
<button aria-label="Explode"><svg viewBox="0 0 24 24"><path d="M12 14V5M12 13l-6 6M12 13l6 6" stroke="#111" stroke-width="2.500"/><path d="m12 1 5 6H7z" fill="#1a4ac8"/><path d="M2 23v-8l8 8z" fill="#c8141c"/><path d="M22 23v-8l-8 8z" fill="#1a7a1a"/></svg></button>
<i class="sep"></i>
<button aria-label="Galapagos"><svg viewBox="0 0 24 24"><path d="M9 3v18q-5 0-3-5l3-4-3-4q-2-5 3-5z" fill="#fff" stroke="#111" stroke-width="1.500"/><path d="M2 6q3 0 4 3M2 18q3 0 4-3" stroke="#111" fill="none" stroke-width="1.500"/><path d="M10 2h9l3 3v14l-3 3h-9z" fill="#555" stroke="#111"/><path d="M13 3v18" stroke="#ddd" stroke-width="2"/></svg></button>
<span class="grow"></span>
<button aria-label="Markov"><svg viewBox="0 0 24 24"><path d="M3 4h18v17H3z" fill="#6eb0fa" stroke="#0c2a78" stroke-width="1.500"/><path d="M13 4h8v4h-8z" fill="#fff" stroke="#0c2a78"/></svg></button>
<i class="sep"></i>
<button aria-label="No preview"><svg viewBox="0 0 24 24"><path d="m3 12 5-9q6-4 12 3l-3 9H6z" fill="#ccc" stroke="#777"/><ellipse cx="14" cy="6" rx="4" ry="3" fill="#aaa" stroke="#777"/><ellipse cx="12" cy="17" rx="9" ry="5.500" fill="#332e33"/></svg></button>
<button aria-label="Wireframe"><svg viewBox="0 0 24 24"><use href="#can" fill="#f4f4f4"/><ellipse cx="8" cy="16" rx="4" ry="5" transform="rotate(-35 8 16)" fill="none" stroke="#333"/></svg></button>
<button class="sel" aria-label="Shaded"><svg viewBox="0 0 24 24"><use href="#can" fill="#c8141c"/></svg></button>
<i class="sep wide"></i>
<button aria-label="Selected preview"><svg viewBox="0 0 24 24"><path d="M1 2q6 0 8 8l-3 8q5 5 12 5" stroke="#555" fill="none"/><path d="m7 6 8-4 7 6-5 13q-5 3-9-2l2-7z" fill="#0c84a8" stroke="#0a4a60"/><ellipse cx="17" cy="8" rx="3" ry="4" fill="#7cc8e0"/></svg></button>
<button aria-label="Document preview"><svg viewBox="0 0 24 24"><path d="m2 14 6-7 10 11-6 4q-8 1-10-8z" fill="#ddd" stroke="#444"/><path d="m8 6 7-5q7 1 7 8l-4 7z" fill="#2a9a28" stroke="#144a14"/><ellipse cx="17" cy="6" rx="3" ry="2" fill="#a4d850"/><path d="m2 2 20 20" stroke="#111" stroke-width="1.500"/></svg></button>
<button aria-label="Mesh quality"><svg viewBox="0 0 24 24"><circle cx="12" cy="12" r="10" fill="#e4e4e4" stroke="#555"/><path d="M12 2a10 10 0 0 0 0 20z" fill="#e8861a"/><path d="M12 12v10a10 10 0 0 1-7-3q7-1 7-7z" fill="#b83010"/></svg></button>
<i class="sep thin"></i>
<button aria-label="Ball"><svg viewBox="0 0 24 24"><circle cx="12" cy="12" r="9.500" fill="url(#gball)" stroke="#123a8c"/></svg></button>
<button class="ar end" aria-label="Ball options"><svg viewBox="0 0 8 8"><use href="#caret"/></svg></button>
</div>

<div class="canvas">
<div class="paper"></div>
<svg class="layer" viewBox="2 199 1238 740" aria-hidden="true"><path d="M106 199v740M313 199v740M521 199v740M728 199v740M935 199v740M1143 199v740M2 238h1238M2 307h1238M2 376h1238M2 446h1238M2 515h1238M2 584h1238M2 653h1238M2 722h1238M2 792h1238M2 861h1238M2 930h1238" stroke="#223" stroke-opacity=".17" fill="none" stroke-width="1" transform="translate(.5 .5)"/></svg>
<div class="group"></div>
<h1 class="big">Image Weaving 3D</h1>
<p class="note">This script uses MeshTools, Human, Weaverbird, and Wombat. Please install prior to use.</p>

<svg class="layer" viewBox="2 199 1238 740" aria-hidden="true">
<g fill="none" stroke="#000" stroke-width="4">
<path d="M309 501h34"/><path d="M437 508h36" stroke-width="7"/><path d="M437 508h36" stroke="#ccc" stroke-width="1.500"/>
<path d="M956 442c35 0 35-12 72-12M968 508c30 0 30-23 60-23M970 554c32 0 28-41 58-41M973 602c40 0 20-61 55-61M973 658c40 0 20-62 55-62M983 791c50 0 0 81 45 81M984 849c28 0 14 51 44 51M976 914c16 0 22 17 34 40"/>
</g>
<g fill="#fff" stroke="#000" stroke-width="2.200">
<circle cx="138" cy="501" r="5"/><circle cx="306" cy="501" r="5"/><circle cx="346" cy="501" r="5"/><circle cx="346" cy="529" r="5"/><circle cx="346" cy="557" r="5"/><circle cx="432" cy="508" r="5"/><circle cx="432" cy="550" r="5"/><circle cx="477" cy="508" r="5"/><circle cx="964" cy="508" r="5"/><circle cx="952" cy="442" r="5"/>
<circle cx="865" cy="554" r="5"/><circle cx="966" cy="554" r="5"/><circle cx="969" cy="602" r="5"/><circle cx="969" cy="658" r="5"/><circle cx="879" cy="791" r="5"/><circle cx="979" cy="791" r="5"/><circle cx="880" cy="849" r="5"/><circle cx="980" cy="849" r="5"/><circle cx="971" cy="914" r="5"/>
<circle cx="1031" cy="430" r="5"/><circle cx="1031" cy="458" r="5"/><circle cx="1031" cy="485" r="5"/><circle cx="1031" cy="513" r="5"/><circle cx="1031" cy="541" r="5"/><circle cx="1031" cy="568" r="5"/><circle cx="1031" cy="596" r="5"/><circle cx="1031" cy="624" r="5"/><circle cx="1031" cy="651" r="5"/><circle cx="1031" cy="679" r="5"/><circle cx="1031" cy="707" r="5"/><circle cx="1031" cy="734" r="5"/><circle cx="1031" cy="762" r="5"/><circle cx="1031" cy="790" r="5"/><circle cx="1031" cy="817" r="5"/><circle cx="1031" cy="845" r="5"/><circle cx="1031" cy="872" r="5"/><circle cx="1031" cy="900" r="5"/><circle cx="1031" cy="928" r="5"/>
</g></svg>

<div class="node wcd">Weave Card Directory</div>
<div class="node dir"><div class="io"><span>P</span><span>F</span><span>S</span></div><div class="core"><b>Dir</b></div><div class="io"><span>F</span><span>N</span></div></div>
<div class="ms">15ms<svg viewBox="0 0 16 8"><path d="M0 8 8 1l8 7z" fill="#ccc"/><path d="M0 8 8 1l8 7" fill="none" stroke="#333"/></svg></div>
<button class="node path">C:\Users\matth\Desktop\WeaveaPatterns\WeavePattern_003.png<svg viewBox="0 0 18 18"><use href="#tri"/></svg></button>
<div class="node tog onoff"><span>On/Off</span><button>True</button></div>
<div class="node tog lores"><span>Low Res/Hi Res</span><button>False</button></div>
<div class="node tog inv"><span>Invert Weave</span><button>False</button></div>
<div class="pan sc"><span>Scale</span><output>20</output></div>
<div class="pan ox"><span>Oblique X</span><output>0</output></div>
<div class="pan oy"><span>Oblique Y</span><output>0</output></div>
<button class="node ren">Render Image<svg viewBox="0 0 18 18"><use href="#tri"/></svg></button>
<div class="node tog low"><button aria-label="Toggle"></button></div>
<ul class="comp"><li>Mesh On/Off</li><li></li><li>Weave Card Path</li><li>Scale</li><li>LoRes/HiRes</li><li></li><li>Invert Weave</li><li>Remap Value</li><li>Adjust Weave A_0.01 to 0.49</li><li>Adjust Weave B_0.01 to 0.49</li><li></li><li>Image Distort Path</li><li>Image Influence</li><li></li><li>Radius</li><li>Ends</li><li>Oblique Amt X</li><li>Oblique Amt Y</li><li></li></ul>
<div class="stub"></div>
<svg class="widget" viewBox="0 0 48 48" aria-hidden="true"><path d="M2 5h8l-1 9z"/><circle cx="26" cy="26" r="20.500" fill="none" stroke="#000" stroke-width="4" stroke-dasharray="6 10"/><circle cx="26" cy="26" r="19.500" fill="url(#gw)" stroke="#222"/><circle cx="26" cy="26" r="18.500" fill="none" stroke="#fff" stroke-width="1.500"/><path d="m11 14 5-1-3 5zM36 10l4 5 1-5zM14 38l4 3-5 1zM38 37l3-3v5z" fill="#fff"/></svg>
<svg class="cursor" viewBox="0 0 14 22" aria-hidden="true"><path d="M1 1v16l4-4 3 7 2.500-1-3-7H13z" fill="#fff" stroke="#222"/></svg>

<div class="float">
<button aria-label="Link"><svg viewBox="0 0 24 24"><path d="M1 1h22v22H1z" fill="#a8c8fa"/><path d="M4 4h16v16H4z" fill="#fff"/><circle cx="12" cy="9" r="3.500" fill="none" stroke="#2a5ab0" stroke-width="1.800"/><circle cx="9.500" cy="13.500" r="3.500" fill="none" stroke="#c83048" stroke-width="1.800"/><circle cx="14.500" cy="13.500" r="3.500" fill="none" stroke="#3a8a3a" stroke-width="1.800"/></svg></button>
<button aria-label="GHA"><svg viewBox="0 0 24 24"><path d="M5 7q6-7 13-2V2l4 6h-8l2-1q-5-3-11 0z" fill="#2a5aa8"/><path d="M19 18q-6 7-13 2v3l-4-6h8l-2 1q5 3 11 0z" fill="#b03048"/><text class="gha" x="12" y="16">GHA</text></svg></button>
<button aria-label="Window"><svg viewBox="0 0 24 24"><path d="M1 1h22v22H1z" fill="#fff" stroke="#111" stroke-width="1.400"/><path d="M1 1h6v4H1z" fill="#113"/><path d="M19 1h4v3h-4z" fill="#e22"/><path d="m8 7 8 3-2 9-8-4z" fill="#777"/><path d="m16 10 3 2-2 6-3 1z" fill="#5a4"/></svg></button>
<button aria-label="Search"><svg viewBox="0 0 24 24"><circle cx="10" cy="10" r="8.500" fill="#a8c8f4" stroke="#111" stroke-width="1.500"/><path d="m17 17 5 5" stroke="#123a70" stroke-width="4"/><path d="M13 7q-5-2-5 1 0 1 2 1.500 3 1 2 3-2 2-5 0" fill="none" stroke="#111" stroke-width="1.500"/></svg></button>
<button aria-label="Box"><svg viewBox="0 0 24 24"><path d="M2 7 5 2h14l3 5v15H2z" fill="#f46a94" stroke="#7a1a3a" stroke-width="1.500"/><path d="M2 8h20M9 2v7h6V2" stroke="#7a1a3a" fill="#b03058"/><path d="M15 13h3v3h-2v2M16 20v1" stroke="#411" fill="none"/></svg></button>
<button aria-label="Balloons"><svg viewBox="0 0 24 24"><path d="M9 17Q1 12 2 7q3-7 10-4v14z" fill="#f6a0bc" stroke="#222"/><path d="M12 17Q6 11 8 6q3-6 9-5 8 3 5 10l-6 7z" fill="#a8c8fa" stroke="#222"/><path d="M12 18h5v4h-5z" fill="#777"/></svg></button>
<button aria-label="Weave"><svg viewBox="0 0 24 24"><path d="M1 2q8 0 11 5t11 5M1 12q8 0 11-5T23 2" stroke="#222" stroke-width="3.500" fill="none"/><path d="M1 2q8 0 11 5t11 5" stroke="#c04068" stroke-width="1.800" fill="none"/><path d="M1 12q8 0 11 5t11 5M1 22q8 0 11-5t11-5" stroke="#222" stroke-width="3.500" fill="none"/><path d="M1 12q8 0 11 5t11 5" stroke="#5a88d0" stroke-width="1.800" fill="none"/></svg></button>
<button aria-label="Remove"><svg viewBox="0 0 24 24"><path d="m1 8 14 4-5 3 4 5-3 2-4-5-3 4z" fill="#f88aac" stroke="#b03058"/><path d="m13 3 9 9M22 3l-9 9" stroke="#d8141c" stroke-width="4"/></svg></button>
<button aria-label="Mouse wire"><svg viewBox="0 0 24 24"><path d="M2 21Q8 21 7 12T5 2M2 6l3-4 3 4" stroke="#f080a0" stroke-width="2" fill="none"/><path d="M2 22Q12 21 11 12T21 4M18 1l4 3-4 3" stroke="#b03058" stroke-width="1.500" fill="none"/><rect x="14" y="12" width="8" height="11" rx="3" fill="#fbb" stroke="#b03058"/><path d="M14 17h8M18 12v5" stroke="#b03058"/></svg></button>
<button aria-label="Untangle"><svg viewBox="0 0 24 24"><path d="M1 3q6 0 8 3M23 3q-8 0-11 5T1 13M15 10q3 3 8 3M1 22q8 0 11-5t11-4M15 19q3 3 8 3M1 13q5 0 7 3" stroke="#b03058" stroke-width="2.500" fill="none"/></svg></button>
<button aria-label="Refresh"><svg viewBox="0 0 24 24"><circle cx="12" cy="12" r="10.500" fill="#fb8cae" stroke="#b03058"/><path d="M6 12a6 6 0 1 1 5 6" fill="none" stroke="#fff" stroke-width="2"/><path d="m3 11 6 0-3 4z" fill="#fff"/></svg></button>
<button aria-label="Palette"><svg viewBox="0 0 24 24"><path d="M3 3q7-4 11 2 1 3 6 3 4 3 1 9-2 7-11 6Q1 19 2 8z" fill="#ddd" stroke="#111" stroke-width="1.500"/><circle cx="8" cy="8" r="3" fill="#b03048" stroke="#111"/><circle cx="9" cy="16" r="3" fill="#4a9a3a" stroke="#111"/><circle cx="16" cy="15" r="3" fill="#2a5ac0" stroke="#111"/></svg></button>
<button aria-label="Table"><svg viewBox="0 0 24 24"><path d="M2 4V1h9v3h11v19H2z" fill="#b03058"/><path d="M3 5h18v17H3z" fill="#fb8cae"/><path d="M5 8h4v3H5zM10 8h4v3h-4zM15 8h4v3h-4zM5 12h4v3H5zM10 12h4v3h-4zM15 12h4v3h-4zM5 16h4v3H5zM10 16h4v3h-4zM15 16h4v3h-4z" fill="#b03058"/></svg></button>
<button aria-label="Disable"><svg viewBox="0 0 24 24"><path d="M1 1h22v22H1z" fill="#bbb8b4" stroke="#2a5ab0" stroke-width="1.500"/><circle cx="12" cy="12" r="8.500" fill="none" stroke="#b03058" stroke-width="2"/><path d="m6 18 12-12" stroke="#b03058" stroke-width="2"/></svg></button>
</div>
</div>
</section>

<aside class="right">
<div class="view"></div>
<div class="htabs"><button>Origin Help</button><button>Web Help</button><button>Example</button><button class="on">Params Help</button><button>Development Help</button><button>File Manager</button><button>Settings</button></div>
<div class="help"><svg viewBox="0 0 24 24"><use href="#hx"/><text class="n" x="5" y="16">C:/</text></svg><h2>File Path (Weave Card Directory)</h2></div>
</aside>
</main>

<footer class="status"><svg viewBox="0 0 18 18"><circle cx="9" cy="9" r="7.500" fill="#2a9ae8" stroke="#0c2a78" stroke-width="2"/><path d="M7.500 4h3v6h-3zM7.500 12h3v2h-3z" fill="#fff" stroke="#0c2a58"/></svg><span>Solution completed in ~2.0 seconds (220 seconds ago)</span><span class="ver">1.0.0007</span><svg class="grip" viewBox="0 0 12 12"><path d="M9 1h2v2H9zM5 5h2v2H5zM9 5h2v2H9zM1 9h2v2H1zM5 9h2v2H5zM9 9h2v2H9z" fill="#aaa"/></svg></footer>
</body>
</html>
```
FILE: styles.css
```css
* { box-sizing: border-box; }
html, body { height: 100%; margin: 0; }
body {
  display: flex; flex-direction: column; overflow: hidden;
  background: #efefef; color: #000;
  font: 12px/16px Roboto, "Noto Sans", sans-serif;
}
button { border: 0; padding: 0; margin: 0; background: none; color: inherit; font: inherit; }
svg { display: block; }
h1, h2, p, ul { margin: 0; padding: 0; }
.defs { position: absolute; width: 0; height: 0; }

.title { flex: none; display: flex; align-items: center; justify-content: space-between; height: 30px; padding-left: 8px; background: #fff; color: #999; }
.win { display: flex; }
.win button { width: 46px; display: grid; place-items: center; }
.win svg { width: 12px; height: 12px; fill: none; stroke: #888; }

.menu { flex: none; display: flex; align-items: center; height: 27px; padding: 0 10px 0 4px; background: linear-gradient(90deg, #f0f0f0, #fcfcfc); }
.menu button { padding: 0 9px; }
.doc { margin-left: auto; }

.tabs { flex: none; display: flex; height: 23px; border-bottom: 1px solid #999; }
.tabs button { width: 28px; height: 23px; padding-top: 1px; display: grid; place-items: center; font: 800 17px/20px "Open Sans", sans-serif; color: #322a34; }
.tabs svg { width: 18px; height: 18px; }
.tabs .on { background: linear-gradient(#fff, #ddd); border: 1px solid #aaa; border-bottom: 0; border-left: 0; border-radius: 6px 6px 0 0; }

.ribbon { flex: none; display: flex; gap: 4px; height: 86px; padding: 2px 3px 8px; background: linear-gradient(#dadada, #efefef 75%); border-bottom: 1px solid #aaa; }
.panel { display: flex; flex-direction: column; height: 73px; border: 1px solid #777; border-radius: 5px; background: linear-gradient(#d6d6d6, #efefef); overflow: hidden; }
.icons { flex: 1; display: flex; padding: 1px; }
.g { display: grid; grid-auto-flow: column; grid-template-rows: 28px 28px; grid-auto-columns: 28px; }
.g + .g { position: relative; margin-left: 10px; }
.g + .g::before { content: ""; position: absolute; left: -6px; top: 3px; bottom: 3px; width: 2px; background: linear-gradient(90deg, #aaa, #fafafa); }
.g button { display: grid; place-items: center; }
.g svg { width: 24px; height: 24px; overflow: visible; }
.panel h2 { flex: none; height: 14px; margin: 0; padding-right: 9px; position: relative; background: #222; color: #eee; font: 12px/13px Roboto, sans-serif; text-align: center; }
.panel h2 svg { position: absolute; right: 1px; top: 2px; width: 8px; height: 8px; }
.w { fill: none; stroke: #fff; stroke-width: 1.4; }
.w2 { fill: none; stroke: #fff; stroke-width: 2.2; }
.big-x { stroke-width: 3; }
.f { fill: #fff; }
svg text { font: bold 7px "Liberation Sans", sans-serif; fill: #fff; }
svg text.b { font: bold 18px "Liberation Serif", serif; text-anchor: middle; }
svg text.b.s { font-size: 14px; }
svg text.k { fill: #111; font-size: 9px; }
svg text.k.d { font-size: 14px; fill: #444; font-style: italic; }
svg text.u { font: bold 7px "Liberation Sans", sans-serif; }
svg text.u.l { font: bold 17px "Liberation Sans", sans-serif; }
svg text.m { font: 10px "Liberation Sans", sans-serif; fill: #111; text-anchor: middle; }
svg text.r { font: 9px "Liberation Sans", sans-serif; text-anchor: middle; fill: #888; }
svg text.red { fill: #d82020; }
svg text.vb { font: bold 16px "Liberation Sans", sans-serif; fill: #1a3a9c; }
svg text.c2 { fill: #3a68b8; }
svg text.abc { font: bold 10px "Liberation Sans", sans-serif; fill: #222; }
svg text.p { font: italic bold 18px "Liberation Sans", sans-serif; fill: #86118a; }
svg text.n { font: bold 9px "Liberation Sans", sans-serif; }
svg text.gha { font: bold 10px "Liberation Sans", sans-serif; fill: #111; text-anchor: middle; }
.line .g svg { fill: none; stroke: #111; stroke-width: 1.4; }
.line .solid { fill: #000; }
.line .dim { stroke: #888; }

.work { flex: 1; min-height: 0; display: flex; border-top: 2px solid #777; }
.left { flex: 1; min-width: 0; display: flex; flex-direction: column; border-left: 2px solid #888; }
.bar { flex: none; display: flex; align-items: center; height: 31px; background: linear-gradient(#fff, #f0f0f0); }
.bar button { flex: none; width: 28px; height: 28px; display: grid; place-items: center; }
.bar button svg { width: 23px; height: 23px; }
.bar .mid { width: 30px; }
.bar .ar { width: 12px; }
.bar .end { width: 10px; }
.bar .ar svg { width: 8px; height: 8px; }
.bar .sel { border: 1px solid #1a78d0; }
.sep { flex: none; width: 10px; height: 21px; background: linear-gradient(#bbb, #bbb) center / 1px 100% no-repeat; }
.wide { width: 16px; }
.thin { width: 6px; }
.bar select { width: 136px; height: 23px; margin-right: 2px; padding: 0 0 0 2px; appearance: none; border: 1px solid #777; border-radius: 0; font: 12px/16px Roboto, sans-serif; color: #000;
  background: linear-gradient(45deg, transparent 46%, #666 46%, #666 54%, transparent 54%) right 9px center / 5px 5px no-repeat, linear-gradient(-45deg, transparent 46%, #666 46%, #666 54%, transparent 54%) right 5px center / 5px 5px no-repeat, #fff; }
.grow { flex: 1; }

.canvas { flex: 1; min-height: 0; position: relative; overflow: hidden; background: repeating-linear-gradient(135deg, rgba(90,80,60,.1) 0 2px, transparent 2px 4px) #d3cec6; font: 14px/18px "Noto Sans", "Open Sans", sans-serif; }
.paper { position: absolute; left: 103px; top: 39px; right: -50px; bottom: -50px; background: #d4cfc9; border: 1px solid #000; box-shadow: 0 0 40px 12px rgba(0,0,0,.45); }
.group { position: absolute; left: 121px; top: 62px; right: -10px; bottom: -10px; background: rgba(242,245,240,.8); border: 1px solid #b8b6b0; }
.layer { position: absolute; left: 0; top: 0; width: 1238px; height: 740px; }
.big { position: absolute; left: 365px; top: 76px; font: 37px/44px "Liberation Sans", sans-serif; white-space: nowrap; }
.note { position: absolute; left: 141px; top: 125px; font: 22px/28px "Liberation Sans", sans-serif; color: #060; white-space: nowrap; }

.node { position: absolute; display: flex; align-items: center; padding-bottom: 2px; border: 1px solid #333; border-radius: 8px; background: linear-gradient(#b0afbd, #8c8b99); box-shadow: inset 0 1px 1px 1px rgba(255,255,255,.35); white-space: nowrap; }
.wcd { left: 136px; top: 288px; width: 168px; height: 29px; justify-content: center; border-radius: 4px; }
.dir { left: 344px; top: 286px; width: 87px; height: 88px; padding: 1px 2px; }
.io { flex: 1; align-self: stretch; padding-bottom: 2px; display: flex; flex-direction: column; justify-content: space-around; text-align: center; }
.core { width: 34px; height: 84px; display: grid; place-items: center; border: 1px solid #444; border-radius: 8px; background: linear-gradient(#eee, #c8c8c8); }
.core b { font: 700 18px/24px "Open Sans", sans-serif; writing-mode: vertical-rl; transform: rotate(180deg); }
.ms { position: absolute; left: 344px; top: 375px; width: 87px; height: 22px; border: 1px solid #333; background: linear-gradient(#d8d8d8, #a4a4a4); text-align: center; }
.ms svg { position: absolute; left: 35px; top: -8px; width: 16px; height: 8px; }
.path { left: 475px; top: 293px; width: 488px; height: 32px; padding: 0 5px 2px 9px; justify-content: space-between; background: linear-gradient(#7890fa, #5870e8); border-color: #124a90; }
.node > svg { width: 18px; height: 18px; }
.tog { justify-content: space-between; height: 31px; padding: 0 2px 0 12px; }
.tog span { padding-bottom: 2px; }
.tog button { width: 65px; height: 26px; padding-bottom: 2px; border: 1px solid #000; border-radius: 2px; background: linear-gradient(#5a555a, #444 45%, #3a333a 55%, #443c44); box-shadow: inset 0 0 0 1px #777; color: #ddd; font: 18px/22px "Liberation Mono", monospace; }
.onoff { left: 805px; top: 227px; width: 145px; }
.lores { left: 768px; top: 388px; width: 199px; }
.inv { left: 783px; top: 443px; width: 184px; }
.low { left: 533px; top: 735px; width: 438px; justify-content: flex-end; }
.pan { position: absolute; width: 101px; border: 1px solid #333; border-radius: 4px; background: #fff; overflow: hidden; text-align: center; display: flex; flex-direction: column; }
.pan span { height: 26px; line-height: 23px; background: #ccc; border-bottom: 2px solid #333; }
.pan output { flex: 1; padding-right: 10px; background: linear-gradient(#bbb, #fff 45%); font: 14px/21px "Liberation Mono", monospace; color: #444; }
.sc { left: 863px; top: 328px; height: 54px; }
.ox { left: 877px; top: 565px; height: 53px; }
.oy { left: 878px; top: 622px; height: 55px; }
.ren { left: 824px; top: 699px; width: 146px; height: 31px; padding: 0 6px 2px 9px; justify-content: space-between; background: linear-gradient(#e4e4e4, #c4c4c4); }
.comp { position: absolute; left: 1029px; top: 214px; width: 209px; height: 528px; padding: 1px 6px 0 0; display: grid; grid-template-rows: repeat(19, 1fr); align-items: center; list-style: none; text-align: right; white-space: nowrap; border: 1px solid #222; border-right: 2px solid #777; border-bottom: 0; border-radius: 8px 0 0 0; background: linear-gradient(#adacb9, #8f8e9c); box-shadow: inset 1px 1px 1px 1px rgba(255,255,255,.35); }
.comp li { padding-bottom: 2px; }
.stub { position: absolute; left: 0; top: 712px; width: 7px; height: 27px; border: 1px solid #000; border-left: 0; background: linear-gradient(#ccc 40%, #77757e 40%); }
.widget { position: absolute; left: 1182px; top: 685px; width: 48px; height: 48px; }
.cursor { position: absolute; left: 234px; top: 314px; width: 14px; height: 22px; }
.float { position: absolute; left: 409px; top: 0; display: flex; }
.float button { width: 30px; height: 30px; display: grid; place-items: center; }
.float svg { width: 22px; height: 22px; }

.right { flex: none; width: 662px; display: flex; flex-direction: column; padding: 0 1px 0 10px; }
.view { flex: 1; background: #a9a9a7; }
.htabs { flex: none; display: flex; align-items: flex-end; height: 27px; padding: 0 0 0 2px; font: 11px/14px "Liberation Sans", sans-serif; }
.htabs button { height: 17px; padding: 0 6px; border: 1px solid #aaa; border-bottom: 0; margin-right: -2px; white-space: nowrap; }
.htabs .on { position: relative; height: 19px; padding: 0 8px; background: #fff; }
.help { flex: none; display: flex; justify-content: center; align-items: flex-start; gap: 6px; height: 25px; border: 1px solid #aaa; background: #fff; overflow: hidden; }
.help svg { width: 24px; height: 24px; }
.help h2 { height: 20px; overflow: hidden; font: bold 20px/24px "Liberation Sans", sans-serif; }

.status { flex: none; display: flex; align-items: center; height: 23px; padding: 2px 2px 0 3px; border-top: 1px solid #ccc; }
.status svg { width: 18px; height: 18px; margin-right: 2px; }
.ver { margin-left: auto; font: 11px/16px "Liberation Sans", sans-serif; color: #777; }
.status .grip { width: 12px; height: 12px; margin: 6px 0 0 17px; }
```
